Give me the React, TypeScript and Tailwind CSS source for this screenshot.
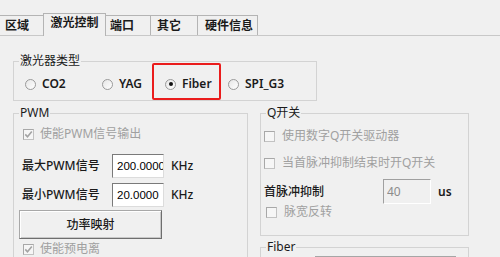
import React from "react";

const tabs = [
  { label: "区域", w: "w-[44px]", pl: "pl-[5px]" },
  { label: "激光控制", active: true },
  { label: "端口", w: "w-[45px]", pl: "pl-[4px]" },
  { label: "其它", w: "w-[47px]", pl: "pl-[6px]" },
  { label: "硬件信息", w: "w-[60px]", pl: "pl-[7px]" },
];

function Radio({ checked }: { checked?: boolean }) {
  return (
    <span className="w-[11px] h-[11px] shrink-0 rounded-full border border-[#9a9a9a] bg-gradient-to-br from-[#e6e6e6] to-white flex items-center justify-center">
      {checked && <span className="w-[4px] h-[4px] rounded-full bg-[#111]" />}
    </span>
  );
}

function Check({ checked }: { checked?: boolean }) {
  return (
    <span className="w-[11px] h-[11px] shrink-0 border border-[#c2c2c2] border-t-[#a8a8a8] border-l-[#a8a8a8] bg-[#f6f6f6] flex items-center justify-center">
      {checked && (
        <svg width="9" height="9" viewBox="0 0 9 9">
          <polyline points="1.3,4.4 3.5,6.8 7.8,1.6" fill="none" stroke="#a3a3a3" strokeWidth="1.6" />
        </svg>
      )}
    </span>
  );
}

function GroupBox({ title, className, children }: { title: string; className: string; children: React.ReactNode }) {
  return (
    <fieldset className={"border border-[#d3d3d3] " + className}>
      <legend className="ml-[5px] px-[1px] leading-[16px] text-[#1a1a1a]">{title}</legend>
      {children}
    </fieldset>
  );
}

export default function App() {
  return (
    <div className="w-[500px] h-[257px] overflow-hidden bg-[#f0f0f0] text-[12px] leading-[16px] text-[#1a1a1a] font-['Noto_Sans','Noto_Sans_CJK_SC',sans-serif]">
      {/* tab strip */}
      <div className="flex items-end h-[36px] border-b border-[#c8c8c8]">
        {tabs.map((t) =>
          t.active ? (
            <div
              key={t.label}
              className="relative z-10 -ml-px -mb-px h-[23px] w-[63px] border-t border-l border-r border-[#b4b4b4] bg-[#f0f0f0] flex justify-center pt-px font-bold"
            >
              {t.label}
            </div>
          ) : (
            <div
              key={t.label}
              className={`h-[20px] ${t.w} ${t.pl} border-t border-r border-[#b4b4b4] flex items-center font-bold`}
            >
              {t.label}
            </div>
          )
        )}
      </div>

      {/* laser type */}
      <GroupBox title="激光器类型" className="ml-[13px] mt-[17px] w-[304px] pb-[8px]">
        <div className="mt-[7px] flex h-[16px] pl-[11px] font-semibold">
          <div className="w-[77px] flex items-center gap-[6px]">
            <Radio />
            CO2
          </div>
          <div className="w-[63px] flex items-center gap-[6px]">
            <Radio />
            YAG
          </div>
          <div className="relative w-[63px] flex items-center gap-[6px]">
            <Radio checked />
            Fiber
            <span className="absolute left-[-13px] top-[-13px] w-[69px] h-[37px] border-2 border-[#ea1c1c] rounded-[2px]" />
          </div>
          <div className="flex items-center gap-[6px]">
            <Radio />
            SPI_G3
          </div>
        </div>
      </GroupBox>

      <div className="flex items-start mt-[4px]">
        {/* PWM */}
        <GroupBox title="PWM" className="ml-[13px] w-[235px] pb-[20px]">
          <div className="mt-[5px] h-[16px] flex items-center gap-[6px] pl-[9px] text-[#a0a0a0]">
            <Check checked />
            使能PWM信号输出
          </div>
          <div className="mt-[12px] h-[24px] flex items-center">
            <span className="w-[98px] pl-[8px] font-medium">最大PWM信号</span>
            <input
              readOnly
              value="200.0000"
              className="w-[52px] h-[24px] bg-white border border-[#dcdcdc] border-t-[#7a7a7a] border-l-[#7a7a7a] pl-[4px] text-[11.5px] font-['Liberation_Sans',sans-serif] text-black outline-none"
            />
            <span className="ml-[7px] font-medium">KHz</span>
          </div>
          <div className="mt-[5px] h-[24px] flex items-center">
            <span className="w-[98px] pl-[8px] font-medium">最小PWM信号</span>
            <input
              readOnly
              value="20.0000"
              className="w-[52px] h-[24px] bg-white border border-[#dcdcdc] border-t-[#7a7a7a] border-l-[#7a7a7a] pl-[4px] text-[11.5px] font-['Liberation_Sans',sans-serif] text-black outline-none"
            />
            <span className="ml-[7px] font-medium">KHz</span>
          </div>
          <button className="mt-[3px] ml-[5px] w-[143px] h-[29px] bg-[#f0f0f0] border border-[#a8a8a8] border-r-[#6e6e6e] border-b-[#6e6e6e] shadow-[inset_1px_1px_0_#ffffff,inset_-1px_-1px_0_#c8c8c8] font-medium">
            功率映射
          </button>
          <div className="mt-[2px] h-[16px] flex items-center gap-[6px] pl-[9px] text-[#a0a0a0]">
            <Check checked />
            使能预电离
          </div>
        </GroupBox>

        <div className="ml-[12px] w-[209px] flex flex-col">
          {/* Q switch */}
          <GroupBox title="Q开关" className="w-[209px] pb-[15px]">
            <div className="mt-[7px] h-[16px] flex items-center gap-[7px] pl-[3px] text-[#a0a0a0]">
              <Check />
              使用数字Q开关驱动器
            </div>
            <div className="mt-[11px] h-[16px] flex items-center gap-[7px] pl-[3px] text-[#a0a0a0]">
              <Check />
              当首脉冲抑制结束时开Q开关
            </div>
            <div className="mt-[8px] h-[25px] flex items-center">
              <span className="w-[122px] pl-[3px] font-medium">首脉冲抑制</span>
              <input
                readOnly
                value="40"
                className="w-[48px] h-[25px] bg-[#f0f0f0] border border-[#ffffff] border-t-[#a0a0a0] border-l-[#a0a0a0] pl-[3px] text-[12px] text-[#8c8c8c] outline-none"
              />
              <span className="ml-[7px] font-semibold">us</span>
            </div>
            <div className="h-[16px] flex items-center gap-[7px] pl-[5px] text-[#a0a0a0]">
              <Check />
              脉宽反转
            </div>
          </GroupBox>

          {/* Fiber */}
          <GroupBox title="Fiber" className="mt-[3px] w-[209px] pb-[10px]">
            <div className="mt-px ml-[54px] w-[141px] h-[22px] border border-[#a6a6a6] bg-[#f4f4f4]" />
          </GroupBox>
        </div>
      </div>
    </div>
  );
}
